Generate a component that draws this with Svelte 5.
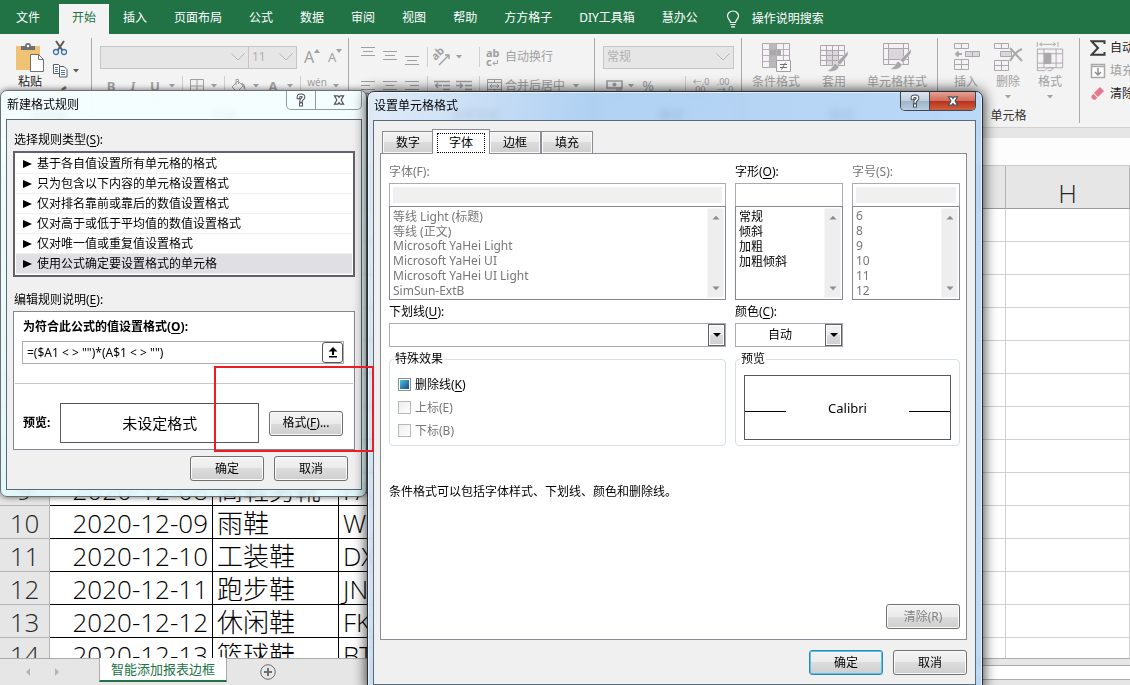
<script lang="ts">
	const menuTabs = [
		'开始',
		'插入',
		'页面布局',
		'公式',
		'数据',
		'审阅',
		'视图',
		'帮助',
		'方方格子',
		'DIY工具箱',
		'慧办公'
	];

	const columns = ['A', 'B', 'C', 'D', 'E', 'F', 'G', 'H'];

	const records: Record<number, string[]> = {
		9: ['2020-12-08', '高鞋男靴', 'FA'],
		10: ['2020-12-09', '雨鞋', 'W'],
		11: ['2020-12-10', '工装鞋', 'DX'],
		12: ['2020-12-11', '跑步鞋', 'JN'],
		13: ['2020-12-12', '休闲鞋', 'FK'],
		14: ['2020-12-13', '篮球鞋', 'BT']
	};
	const rows = Array.from({ length: 14 }, (_, i) => i + 1);

	const ruleTypes = [
		'基于各自值设置所有单元格的格式',
		'只为包含以下内容的单元格设置格式',
		'仅对排名靠前或靠后的数值设置格式',
		'仅对高于或低于平均值的数值设置格式',
		'仅对唯一值或重复值设置格式',
		'使用公式确定要设置格式的单元格'
	];
	let selectedRule = $state(5);
	let formula = $state('=($A1 < > "")*(A$1 < > "")');

	const formatTabs = ['数字', '字体', '边框', '填充'];
	let activeTab = $state('字体');
	let strikeMixed = $state(true);

	const fonts = [
		'等线 Light (标题)',
		'等线 (正文)',
		'Microsoft YaHei Light',
		'Microsoft YaHei UI',
		'Microsoft YaHei UI Light',
		'SimSun-ExtB'
	];
	const fontStyles = ['常规', '倾斜', '加粗', '加粗倾斜'];
	const sizes = ['6', '8', '9', '10', '11', '12'];
</script>

{#snippet caret()}
	<svg class="caret" width="12" height="6" viewBox="0 0 12 6" aria-hidden="true">
		<path d="M3 1h6L6 4.5z" fill="currentColor" />
	</svg>
{/snippet}

{#snippet chevron()}
	<svg class="chevron" width="16" height="10" viewBox="0 0 16 10" aria-hidden="true">
		<path d="M1.500 1.500 8 8l6.500-6.500" fill="none" stroke="#b4b4b4" />
	</svg>
{/snippet}

{#snippet lines(widths: number[], top: number, align: string)}
	<svg width="16" height="20" viewBox="0 0 16 20" aria-hidden="true">
		{#each widths as w, i}
			<rect
				x={align === 'left' ? 1 : align === 'right' ? 15 - w : 8 - w / 2}
				y={top + i * 4}
				width={w}
				height="1"
				fill="#a0a0a0"
			/>
		{/each}
	</svg>
{/snippet}

{#snippet label(text: string, key: string)}{text}(<u>{key}</u>){/snippet}

{#snippet helpGlyph()}
	<svg width="12" height="14" viewBox="0 0 12 14" aria-hidden="true">
		<g fill="none" stroke-linecap="square">
			<path d="M3.500 4.500V3.800C3.500 2.600 4.600 2.200 6 2.200s2.600.6 2.600 2S6 6.200 6 8" stroke="#4a4f5c" stroke-width="3.600" />
			<path d="M3.500 4.500V3.800C3.500 2.600 4.600 2.200 6 2.200s2.600.6 2.600 2S6 6.200 6 8" stroke="#fff" stroke-width="1.600" />
		</g>
		<rect x="4.500" y="10" width="3" height="3" fill="#fff" stroke="#4a4f5c" />
	</svg>
{/snippet}

{#snippet closeGlyph()}
	<svg width="12" height="10" viewBox="0 0 14 12" aria-hidden="true">
		<path
			d="M1.500 1h4.200L7 3l1.300-2h4.200L9.500 6l3 5H8.300L7 9l-1.300 2H1.500l3-5z"
			fill="#fff"
			stroke="#4a4f5c"
			stroke-width="1.400"
		/>
	</svg>
{/snippet}

{#snippet scrollbar()}
	<span class="scrollbar" aria-hidden="true">
		<svg width="8" height="5" viewBox="0 0 8 5"><path d="M0.500 4.500 4 .8l3.500 3.700z" fill="#8c8c8c" /></svg>
		<svg width="8" height="5" viewBox="0 0 8 5"><path d="M0.500 .5 4 4.200 7.500 .5z" fill="#8c8c8c" /></svg>
	</span>
{/snippet}

{#snippet drop()}
	<span class="drop" aria-hidden="true">
		<svg width="8" height="4" viewBox="0 0 8 4"><path d="M0 0h8L4 4z" /></svg>
	</span>
{/snippet}

<div class="app">
	<nav class="menu">
		<button class="tab file">文件</button>
		{#each menuTabs as tab}
			<button class="tab" class:active={tab === '开始'}>{tab}</button>
		{/each}
		<button class="tell-me">
			<svg width="14" height="18" viewBox="0 0 14 18" fill="none" stroke="#fff" aria-hidden="true">
				<path d="M4.500 12.500c0-2.500-3-3.500-3-6.500a5.500 5 0 0 1 11 0c0 3-3 4-3 6.500z" stroke-width="1.200" />
				<path d="M4.500 14.500h5M5 16.800h4" stroke-width="1.200" />
			</svg>
			操作说明搜索
		</button>
	</nav>

	<div class="ribbon">
		<section class="group clipboard">
			<div class="tools">
				<button class="big">
					<svg width="30" height="30" viewBox="0 0 30 30" aria-hidden="true">
						<rect x="1" y="4" width="24" height="24" fill="#efc373" />
						<path d="M6 8V4h4a3 3 0 0 1 6 0h4v4z" fill="#707070" />
						<circle cx="13" cy="4" r="1.200" fill="#fff" />
						<path d="M15.500 12.500h8l5 5v12h-13z" fill="#fff" stroke="#707070" />
						<path d="M23.500 12.500v5h5" fill="none" stroke="#707070" />
					</svg>
					粘贴
				</button>
				<div class="small">
					<svg width="16" height="16" viewBox="0 0 16 16" aria-hidden="true">
						<path d="M4 1l6.500 9.500M12 1 5.500 10.500" stroke="#5a5a5a" stroke-width="2" />
						<circle cx="4" cy="12" r="2.500" fill="none" stroke="#3c78b4" stroke-width="1.300" />
						<circle cx="12" cy="12" r="2.500" fill="none" stroke="#3c78b4" stroke-width="1.300" />
					</svg>
					<span class="pair">
						<svg width="16" height="15" viewBox="0 0 16 15" aria-hidden="true">
							<path d="M1.500 1.500h5l3 3v6h-8z" fill="#fff" stroke="#5a5a5a" />
							<path d="M7.500 3.500h4.500l3 3v7.500H7.500z" fill="#fff" stroke="#5a5a5a" />
							<path d="M3 4.500h3M3 6.500h3M3 8.500h3M9 7.500h4M9 9.500h4M9 11.500h4" stroke="#3c78b4" />
						</svg>
						{@render caret()}
					</span>
					<svg width="16" height="12" viewBox="0 0 16 12" aria-hidden="true">
						<path d="M9 4l4-3 2 2-4 3z" fill="#707070" />
						<path d="M3 8l6-4 2 3-4 5z" fill="#efc373" />
					</svg>
				</div>
			</div>
			<h2>剪贴板</h2>
		</section>

		<section class="group font">
			<div class="row">
				<span class="combo name"><select aria-label="字体" disabled></select>{@render chevron()}</span>
				<span class="combo size">
					<select aria-label="字号" disabled><option>11</option></select>{@render chevron()}
				</span>
				<span class="grow">
					A<svg width="6" height="4" viewBox="0 0 6 4" aria-hidden="true"><path d="M0 4h6L3 0z" /></svg>
				</span>
				<span class="grow shrink">
					A<svg width="6" height="4" viewBox="0 0 6 4" aria-hidden="true"><path d="M0 0h6L3 4z" /></svg>
				</span>
			</div>
			<div class="row">
				<b class="cell">B</b>
				<i class="cell">I</i>
				<u class="cell">U</u>
				{@render caret()}
				<span class="sep"></span>
				<span class="cell">
					<svg width="14" height="14" viewBox="0 0 14 14" aria-hidden="true">
						<path d="M.5.500h13v13H.5zM7 .5v13M.5 7h13" fill="none" stroke="#a0a0a0" />
					</svg>
				</span>
				{@render caret()}
				<span class="sep"></span>
				<span class="cell">
					<svg width="18" height="16" viewBox="0 0 18 16" aria-hidden="true">
						<path d="M2 9l6-6 5 5-6 6zM6 7V1.500h2.500V6" fill="none" stroke="#a0a0a0" />
						<path d="M11 5c3 0 4.500 2 4.500 7-2-1-2-3-2.500-4z" fill="#a0a0a0" />
					</svg>
				</span>
				{@render caret()}
				<b class="cell">A</b>
				{@render caret()}
				<span class="sep"></span>
				<span class="cell phonetic">wén</span>
				{@render caret()}
			</div>
			<h2>字体</h2>
		</section>

		<section class="group align">
			<div class="row">
				<span class="cell">{@render lines([14, 10, 14], 0, 'center')}</span>
				<span class="cell">{@render lines([14, 10, 14], 4, 'center')}</span>
				<span class="cell">{@render lines([14, 10, 14], 9, 'center')}</span>
				<span class="sep"></span>
				<span class="cell">
					<svg width="18" height="18" viewBox="0 0 18 18" aria-hidden="true">
						<text x="0" y="9" transform="rotate(-45 6 8)" font-size="11" font-weight="700" fill="#a0a0a0">ab</text>
						<path d="M6 17 16 7M12 7h4v4" fill="none" stroke="#a0a0a0" stroke-width="1.400" />
					</svg>
				</span>
				{@render caret()}
				<span class="sep after-caret"></span>
				<span class="cell wrap-icon">
					<span>ab</span>
					<span>c<svg width="6" height="6" viewBox="0 0 6 6" aria-hidden="true"><path d="M5.500 0v3.500H1M3 1.500l-2 2 2 2" fill="none" stroke="#a0a0a0" /></svg></span>
				</span>
				<span>自动换行</span>
			</div>
			<div class="row">
				<span class="cell">{@render lines([14, 9, 14, 9], 5, 'left')}</span>
				<span class="cell">{@render lines([14, 9, 14, 9], 5, 'center')}</span>
				<span class="cell">{@render lines([14, 9, 14, 9], 5, 'right')}</span>
				<span class="sep"></span>
				<span class="cell">
					<svg width="16" height="14" viewBox="0 0 16 14" aria-hidden="true">
						<path d="M0 2.500h16M9 6.500h7M9 10.500h7M8 6.500H2M4 4 1.500 6.500 4 9" fill="none" stroke="#a0a0a0" stroke-width="1.400" />
					</svg>
				</span>
				<span class="cell">
					<svg width="16" height="14" viewBox="0 0 16 14" aria-hidden="true">
						<path d="M0 2.500h16M9 6.500h7M9 10.500h7M0 6.500h6M4 4l2.500 2.500L4 9" fill="none" stroke="#a0a0a0" stroke-width="1.400" />
					</svg>
				</span>
				<span class="sep"></span>
				<span class="cell">
					<svg width="15" height="14" viewBox="0 0 15 14" aria-hidden="true">
						<path d="M.5.500h14v13H.5zM.5 3.500h14M.5 10.500h14M7.500 .5v3M7.500 10.500v3M3 7h9M5 5 3 7l2 2M10 5l2 2-2 2" fill="none" stroke="#a0a0a0" />
					</svg>
				</span>
				<span>合并后居中</span>
				<span class="cell">{@render caret()}</span>
			</div>
			<h2>对齐方式</h2>
		</section>

		<section class="group number">
			<div class="row">
				<span class="combo format">
					<select aria-label="数字格式" disabled><option>常规</option></select>{@render chevron()}
				</span>
			</div>
			<div class="row">
				<span class="cell">
					<svg width="17" height="14" viewBox="0 0 17 14" aria-hidden="true">
						<path d="M1 2h15v7H1z" fill="none" stroke="#a0a0a0" stroke-width="1.600" />
						<circle cx="8.500" cy="5.500" r="2" fill="#a0a0a0" />
						<path d="M10 9h6M10 11h6M10 13h6" stroke="#a0a0a0" />
					</svg>
				</span>
				{@render caret()}
				<span class="cell percent">%</span>
				<b class="cell percent">,</b>
				<span class="sep"></span>
				<span class="cell digits">←.0<br />.00</span>
				<span class="cell digits">.00<br />→.0</span>
			</div>
			<h2>数字</h2>
		</section>

		<section class="group styles">
			<div class="tools">
				<button class="big cond" disabled>
					<svg width="30" height="30" viewBox="0 0 30 30" aria-hidden="true">
						<path d="M1.500 1.500h27v24h-27z" fill="#f6f1f7" stroke="#a9a9a9" />
						<path d="M8 1.500h7v24H8z" fill="#bcb9bc" />
						<path d="M8 8h12v5H8z" fill="#a9a9a9" />
						<path d="M1.500 7.500h27M1.500 13.500h27M1.500 19.500h27M8.500 1.500v24M15.500 1.500v24M22.500 1.500v24" stroke="#b5b2b5" />
						<path d="M15.500 18.500h14v11h-14z" fill="#fafafa" stroke="#a0a0a0" />
						<path d="M19 22.500h7M19 25.500h7M24.500 20.500l-4 7" stroke="#707070" />
					</svg>
					条件格式
				</button>
				<button class="big table" disabled>
					<svg width="30" height="30" viewBox="0 0 30 30" aria-hidden="true">
						<path d="M1.500 3.500h24v20h-24z" fill="#f6f1f7" stroke="#a9a9a9" />
						<path d="M7 9h13v14H7z" fill="#dcd6dc" />
						<path d="M1.500 8.500h24M1.500 13.500h24M1.500 18.500h24M7.500 3.500v20M13.500 3.500v20M19.500 3.500v20" stroke="#a9a9a9" />
						<path d="M29 9 18 20l3 3 8-10zM16.500 21.500c-3 .5-2 5-8.500 7.500 7 1.500 11-1 12-4.500z" fill="#a9a6a9" stroke="#f3f3f3" stroke-width=".5" />
					</svg>
					套用
				</button>
				<button class="big cellstyle" disabled>
					<svg width="30" height="30" viewBox="0 0 30 30" aria-hidden="true">
						<path d="M1.500 1.500h25v21h-25z" fill="#f6f1f7" stroke="#a9a9a9" />
						<path d="M6 6h16v11H6z" fill="#dcd6dc" />
						<path d="M1.500 6.500h25M1.500 17.500h25M6.500 1.500v21M21.500 1.500v21" stroke="#a9a9a9" />
						<path d="M29 7 18 18l3 3 8-10zM16.500 19.500c-3 .5-2 5-8.500 7.500 7 1.500 11-1 12-4.500z" fill="#a9a6a9" stroke="#f3f3f3" stroke-width=".5" />
					</svg>
					单元格样式
				</button>
			</div>
			<h2>样式</h2>
		</section>

		<section class="group cells">
			<div class="tools">
				<button class="big" disabled>
					<svg width="28" height="30" viewBox="0 0 28 30" fill="#f6f1f7" stroke="#a9a9a9" aria-hidden="true">
						<path d="M2.500 1.500h14v5h-14zM9.500 1.500v5M2.500 17.500h14v10h-14zM9.500 17.500v10M2.500 22.500h14" />
						<path d="M13.500 9.500h14v5h-14zM20.500 9.500v5" fill="#dcd6dc" />
						<path d="M10 12H4M6.500 9.500 4 12l2.500 2.500" fill="none" stroke-width="1.800" />
					</svg>
					插入{@render caret()}
				</button>
				<button class="big" disabled>
					<svg width="30" height="30" viewBox="0 0 30 30" fill="#f6f1f7" stroke="#a9a9a9" aria-hidden="true">
						<path d="M1.500 1.500h14v5h-14zM8.500 1.500v5M1.500 18.500h14v10h-14zM8.500 18.500v10M1.500 23.500h14" />
						<path d="M7.500 9.500h11v5h-11z" fill="#dcd6dc" />
						<path d="M17 6l12 13M29 7c-5 2-9 6-12 12" fill="none" stroke-width="2" />
					</svg>
					删除{@render caret()}
				</button>
				<button class="big" disabled>
					<svg width="30" height="32" viewBox="0 0 30 32" fill="#f6f1f7" stroke="#a9a9a9" aria-hidden="true">
						<path d="M1.500 0v5M23.500 0v5M4 2.500h17M6.500 .5l-2.500 2 2.500 2M18.500 .5l2.500 2-2.500 2" fill="none" />
						<path d="M1.500 7.500h27v20h-27zM1.500 12.500h27M1.500 22.500h27M8.500 7.500v20M21.500 7.500v20" />
						<path d="M9 12h7v11H9z" fill="#a9a9a9" />
						<path d="M1.500 27.500v3h8l3-3h6l-2 3h-4" fill="none" />
					</svg>
					格式{@render caret()}
				</button>
			</div>
			<h2>单元格</h2>
		</section>

		<section class="edit">
			<button>
				<svg width="16" height="16" viewBox="0 0 16 16" aria-hidden="true">
					<path d="M14.500 4V1.200H1.500L8 8l-6.500 6.800h13V12" fill="none" stroke="#3b3b3b" stroke-width="2" />
				</svg>
				自动求和
			</button>
			<button disabled>
				<svg width="16" height="16" viewBox="0 0 16 16" aria-hidden="true">
					<path d="M1.500 1.500h13v13h-13zM1.500 3.500h13" fill="#fff" stroke="#a9a9a9" stroke-width="1.500" />
					<path d="M8 5v7M5 9l3 3 3-3" fill="none" stroke="#909090" stroke-width="1.500" />
				</svg>
				填充
			</button>
			<button>
				<svg width="16" height="16" viewBox="0 0 16 16" aria-hidden="true">
					<path d="M10 1l4 4-6 6-4-4z" fill="#e8778d" />
					<path d="M3.300 7.800l4 4-2 2H3.500L1.500 12V10z" fill="#e8778d" />
				</svg>
				清除
			</button>
		</section>
	</div>

	<div class="formula-bar"></div>

	<div class="grid">
		<table>
			<colgroup>
				<col class="col-head" /><col class="col-date" /><col class="col-name" />
				<col class="col-mid" /><col class="col-mid" /><col class="col-mid" /><col class="col-mid" />
				<col class="col-last" /><col />
			</colgroup>
			<thead>
				<tr>
					<th></th>
					{#each columns as column}
						<th>{column}</th>
					{/each}
				</tr>
			</thead>
			<tbody>
				{#each rows as row}
					<tr>
						<th>{row}</th>
						{#each columns as column, i}
							<td class:filled={i < 5} class:date={i === 0}>{records[row]?.[i] ?? ''}</td>
						{/each}
					</tr>
				{/each}
			</tbody>
		</table>
	</div>

	<footer class="sheets">
		<svg class="nav" width="64" height="10" viewBox="0 0 64 10" fill="#b4b4b4" aria-hidden="true">
			<path d="M10 1v8L6 5zM35 1v8l4-4z" />
		</svg>
		<button class="sheet">智能添加报表边框</button>
		<button class="add" aria-label="新工作表">
			<svg width="16" height="16" viewBox="0 0 16 16" fill="none" stroke="#6e6e6e" aria-hidden="true">
				<circle cx="8" cy="8" r="7.300" />
				<path d="M8 4v8M4 8h8" stroke-width="2" />
			</svg>
		</button>
		<div class="hscroll"></div>
	</footer>

	<div class="dialog rule" role="dialog" aria-label="新建格式规则">
		<header>
			<h1>新建格式规则</h1>
			<span class="caption">
				<button aria-label="帮助">{@render helpGlyph()}</button>
				<button class="close" aria-label="关闭">{@render closeGlyph()}</button>
			</span>
		</header>
		<div class="body">
			<p class="heading">{@render label('选择规则类型', 'S')}:</p>
			<ul class="types">
				{#each ruleTypes as type, i}
					<li>
						<button class:selected={selectedRule === i} onclick={() => (selectedRule = i)}>
							<svg width="9" height="8" viewBox="0 0 9 8" aria-hidden="true"><path d="M0 0l9 4-9 4z" /></svg>
							{type}
						</button>
					</li>
				{/each}
			</ul>
			<p class="heading second">{@render label('编辑规则说明', 'E')}:</p>
			<div class="description">
				<label for="formula">{@render label('为符合此公式的值设置格式', 'O')}:</label>
				<div class="formula">
					<input id="formula" bind:value={formula} />
					<button aria-label="选择区域">
						<svg width="10" height="11" viewBox="0 0 10 11" aria-hidden="true">
							<path d="M5 0l4.500 4.500H6V8H4V4.500H.5zM1 9h8v1.500H1z" />
						</svg>
					</button>
				</div>
				<hr />
				<div class="preview-row">
					<b>预览:</b>
					<output>未设定格式</output>
					<button class="btn">{@render label('格式', 'F')}...</button>
				</div>
			</div>
			<div class="actions">
				<button class="btn">确定</button>
				<button class="btn">取消</button>
			</div>
		</div>
	</div>

	<div class="dialog cellfmt" role="dialog" aria-label="设置单元格格式">
		<header>
			<h1>设置单元格格式</h1>
			<span class="caption">
				<button aria-label="帮助">{@render helpGlyph()}</button>
				<button class="close" aria-label="关闭">{@render closeGlyph()}</button>
			</span>
		</header>
		<div class="body">
			<div class="tabs" role="tablist">
				{#each formatTabs as tab}
					<button role="tab" aria-selected={activeTab === tab} onclick={() => (activeTab = tab)}>
						<span>{tab}</span>
					</button>
				{/each}
			</div>
			<div class="panel">
				<div class="fields">
					<div class="field off">
						<label for="font-name">字体(F):</label>
						<input id="font-name" disabled />
						<div class="list">
							<select size="6" aria-label="字体列表" disabled>
								{#each fonts as font}<option>{font}</option>{/each}
							</select>
							{@render scrollbar()}
						</div>
					</div>
					<div class="field">
						<label for="font-style">{@render label('字形', 'O')}:</label>
						<input id="font-style" />
						<div class="list">
							<select size="6" aria-label="字形列表">
								{#each fontStyles as style}<option>{style}</option>{/each}
							</select>
							{@render scrollbar()}
						</div>
					</div>
					<div class="field off">
						<label for="font-size">字号(S):</label>
						<input id="font-size" disabled />
						<div class="list">
							<select size="6" aria-label="字号列表" disabled>
								{#each sizes as size}<option>{size}</option>{/each}
							</select>
							{@render scrollbar()}
						</div>
					</div>
					<div class="field picker">
						<label for="underline">{@render label('下划线', 'U')}:</label>
						<span class="dropdown"><select id="underline"><option></option></select>{@render drop()}</span>
					</div>
					<div class="field picker">
						<label for="color">{@render label('颜色', 'C')}:</label>
						<span class="dropdown color"><select id="color"><option>自动</option></select>{@render drop()}</span>
					</div>
					<fieldset class="effects">
						<legend>特殊效果</legend>
						<label>
							<input type="checkbox" bind:indeterminate={strikeMixed} />
							<span>{@render label('删除线', 'K')}</span>
						</label>
						<label class="off"><input type="checkbox" disabled />上标(E)</label>
						<label class="off"><input type="checkbox" disabled />下标(B)</label>
					</fieldset>
					<fieldset class="sample">
						<legend>预览</legend>
						<div><span>Calibri</span></div>
					</fieldset>
				</div>
				<p class="note">条件格式可以包括字体样式、下划线、颜色和删除线。</p>
				<button class="btn clear" disabled>清除(R)</button>
			</div>
			<div class="actions">
				<button class="btn default">确定</button>
				<button class="btn">取消</button>
			</div>
		</div>
	</div>

	<div class="marker"></div>
</div>

<style>
	:global(body) {
		background: #e6e6e6;
	}
	.app {
		position: relative;
		display: flex;
		flex-direction: column;
		height: 100vh;
		overflow: hidden;
		font: 12px/18px 'Noto Sans', 'Noto Sans CJK SC', sans-serif;
		color: #000;
	}
	.app :global(*) {
		box-sizing: border-box;
	}
	button,
	input,
	select {
		margin: 0;
		padding: 0;
		border: 0;
		background: none;
		color: inherit;
		font: inherit;
	}
	h1,
	h2,
	p,
	ul {
		margin: 0;
		padding: 0;
		font-size: 12px;
		font-weight: 400;
		list-style: none;
	}
	svg {
		flex: none;
	}
	u {
		text-underline-offset: 2px;
	}

	/* menu */
	.menu {
		display: flex;
		gap: 1px;
		height: 34px;
		padding-top: 4px;
		background: #217346;
		color: #fff;
		white-space: nowrap;
	}
	.tab {
		padding: 0 13px 2px;
	}
	.tab.file {
		margin-right: 2px;
		padding: 0 16px 2px;
	}
	.tab.active {
		background: #f3f3f3;
		color: #217346;
	}
	.tell-me {
		display: flex;
		align-items: center;
		gap: 12px;
		margin-left: 14px;
	}

	/* ribbon */
	.ribbon {
		display: flex;
		height: 94px;
		flex: none;
		padding: 4px 0;
		overflow: hidden;
		border-bottom: 1px solid #d2d2d2;
		background: #f3f3f3;
		color: #a0a0a0;
		white-space: nowrap;
	}
	.group {
		display: grid;
		flex: none;
		grid-template-rows: 38px 20px 26px;
		padding: 0 0 0 8px;
		border-right: 1px solid #ababab;
	}
	.group h2 {
		grid-row: 3;
		align-self: end;
		color: #333;
		line-height: 12px;
		text-align: center;
	}
	.clipboard {
		width: 92px;
	}
	.font {
		width: 257px;
	}
	.align {
		width: 246px;
	}
	.number {
		width: 147px;
	}
	.styles {
		width: 196px;
		padding-left: 4px;
	}
	.cells {
		width: 142px;
		padding: 0 7px;
	}
	.row,
	.tools {
		display: flex;
		align-items: center;
	}
	.tools {
		grid-row: 1 / 3;
		align-items: start;
		min-height: 0;
	}
	.big {
		display: flex;
		flex-direction: column;
		align-items: center;
		width: 42px;
		padding-top: 4px;
		line-height: 20px;
	}
	.big:not(:disabled) {
		color: #222;
	}
	.clipboard .big {
		width: 44px;
	}
	.big svg:first-child {
		height: 30px;
	}
	.big .caret {
		margin-top: 2px;
	}
	.cond {
		width: 60px;
	}
	.table {
		width: 56px;
	}
	.cellstyle {
		width: 70px;
	}
	.small {
		display: flex;
		flex-direction: column;
		gap: 7px;
		padding-top: 2px;
		color: #5a5a5a;
	}
	.pair {
		display: flex;
		align-items: center;
		gap: 2px;
	}
	.combo {
		display: grid;
		height: 23px;
		border: 1px solid #c6c6c6;
		background: #e6e6e6;
	}
	.combo > :global(*) {
		grid-area: 1 / 1;
	}
	.combo select {
		padding: 0 3px;
		appearance: none;
		color: #b0b0b0;
		opacity: 1;
	}
	.chevron {
		align-self: center;
		justify-self: end;
		margin-right: 2px;
		pointer-events: none;
	}
	.combo.name {
		width: 149px;
	}
	.combo.size {
		width: 49px;
		margin-left: -1px;
	}
	.combo.format {
		width: 131px;
	}
	.grow {
		display: flex;
		width: 24px;
		padding-left: 7px;
		font-size: 16px;
	}
	.grow svg {
		margin-top: 1px;
		fill: currentColor;
	}
	.grow.shrink {
		font-size: 13px;
	}
	.cell {
		display: flex;
		justify-content: center;
		width: 22px;
		font-size: 13px;
	}
	i.cell {
		font-family: 'Liberation Serif', serif;
		font-weight: 700;
	}
	u.cell {
		font-weight: 700;
	}
	.wrap-icon {
		flex-direction: column;
		align-items: start;
		padding-left: 3px;
		font-size: 11px;
		font-weight: 700;
		line-height: 9px;
	}
	.cell.phonetic {
		width: 26px;
		padding-bottom: 8px;
		font-size: 10px;
	}
	.cell.digits {
		width: 24px;
		font-size: 9px;
		line-height: 8px;
	}
	.cell.percent {
		font-size: 14px;
	}
	.sep {
		width: 8px;
		height: 20px;
		background: linear-gradient(#d0d0d0, #d0d0d0) center / 1px 100% no-repeat;
	}
	.sep.after-caret {
		margin-left: 10px;
	}
	.edit {
		display: flex;
		flex-direction: column;
		gap: 5px;
		padding: 1px 0 0 10px;
	}
	.edit button {
		display: flex;
		align-items: center;
		gap: 4px;
		color: #222;
	}
	.edit button:disabled {
		color: #a0a0a0;
	}

	/* worksheet */
	.formula-bar {
		flex: none;
		height: 38px;
		border-top: 10px solid #e6e6e6;
		border-bottom: 1px solid #c9c9c9;
		background: #fdfdfd;
	}
	.grid {
		flex: 1;
		min-height: 0;
		overflow: hidden;
		background: #fff;
	}
	table {
		width: 100%;
		border-spacing: 0;
		table-layout: fixed;
		font-family: 'Open Sans', 'Noto Sans CJK SC', sans-serif;
		font-size: 26px;
		font-weight: 300;
		line-height: 30px;
	}
	.col-head {
		width: 50px;
	}
	.col-date {
		width: 163px;
	}
	.col-name {
		width: 126px;
	}
	.col-mid {
		width: 133px;
	}
	.col-last {
		width: 135px;
	}
	th,
	td {
		height: 33px;
		padding: 2px 0 0;
		border: 0 solid #d0d0d0;
		border-width: 0 1px 1px 0;
		overflow: hidden;
		white-space: nowrap;
	}
	th {
		border-color: #b4b4b4;
		background: #e6e6e6;
		color: #262626;
		font-weight: 300;
	}
	thead th {
		height: 43px;
		padding-top: 12px;
		border-bottom-color: #9b9b9b;
	}
	td {
		padding-left: 4px;
	}
	td.filled {
		border-color: #000;
	}
	td.date {
		padding-right: 4px;
		text-align: right;
	}
	.sheets {
		display: flex;
		flex: none;
		height: 27px;
		border-top: 1px solid #ababab;
		background: #e6e6e6;
	}
	.nav {
		align-self: center;
		margin: 0 15px 0 20px;
	}
	.sheet {
		width: 128px;
		height: 24px;
		margin-top: -1px;
		border: 1px solid #ababab;
		border-width: 0 1px 2px;
		border-bottom-color: #217346;
		background: #fff;
		color: #217346;
		font-size: 13px;
	}
	.add {
		display: flex;
		margin: 5px 0 0 33px;
	}
	.hscroll {
		flex: 1;
		height: 15px;
		margin: 6px 0 0 120px;
		border: 1px solid #ababab;
		border-right: 0;
		background: #fff;
	}

	/* dialogs */
	.dialog {
		position: absolute;
		border: 1px solid #2b2f33;
		border-radius: 7px;
		backdrop-filter: blur(3px);
	}
	.dialog header {
		display: flex;
		align-items: start;
		justify-content: space-between;
		height: 28px;
	}
	.dialog h1 {
		padding: 5px 0 0 1px;
	}
	.body {
		display: flex;
		flex-direction: column;
		border: 1px solid #5c6a75;
		background: #f0f0f0;
	}
	.caption {
		display: flex;
		border: 1px solid #8f9ba3;
		border-top: 0;
		border-radius: 0 0 5px 5px;
		overflow: hidden;
	}
	.caption button {
		display: flex;
		align-items: center;
		justify-content: center;
		width: 28px;
		height: 18px;
	}
	.caption .close {
		width: 46px;
		border-left: 1px solid #8f9ba3;
	}
	.btn {
		width: 74px;
		height: 25px;
		border: 1px solid #707070;
		border-radius: 3px;
		background: linear-gradient(#f3f3f3, #ebebeb 50%, #dcdcdc 50%, #cecece);
		box-shadow: inset 0 0 0 1px #fbfbfb;
	}
	.btn.default {
		border-color: #3c7fb1;
		box-shadow: inset 0 0 0 1px #4cc9f0;
	}
	.btn:disabled {
		color: #838383;
	}
	.actions {
		display: flex;
		gap: 10px;
		justify-content: flex-end;
	}

	.rule {
		top: 90px;
		left: 0;
		width: 367px;
		padding: 0 4px 6px 5px;
		background: linear-gradient(rgba(245, 255, 255, 0.9), rgba(225, 250, 253, 0.85));
		box-shadow: 0 0 6px rgba(0, 0, 0, 0.6);
		border-color: #6a7074;
	}
	.rule .body {
		padding: 11px 6px 8px;
	}
	.rule .heading {
		padding: 0 1px 2px;
	}
	.types {
		padding: 1px;
		border: 2px solid #62626a;
		background: #fff;
	}
	.types button {
		display: flex;
		align-items: center;
		gap: 5px;
		width: 100%;
		height: 20px;
		padding: 1px 0 0 7px;
		border-bottom: 1px solid #efefef;
	}
	.types button.selected {
		background: #e0dfe4;
	}
	.rule .heading.second {
		padding-top: 14px;
	}
	.description {
		padding: 6px 8px;
		border: 1px solid #828790;
		background: #fff;
	}
	.description label {
		display: block;
		padding-left: 1px;
		font-weight: 700;
	}
	.formula {
		display: flex;
		height: 23px;
		margin: 5px 2px 0 0;
		border: 1px solid #ababb3;
	}
	.formula input {
		flex: 1;
		min-width: 0;
		padding-left: 4px;
	}
	.formula button {
		width: 21px;
		border: 1px solid #555;
		border-radius: 3px;
		line-height: 10px;
	}
	hr {
		margin: 19px -7px 0;
		border: 0;
		border-top: 1px solid #c8c8c8;
	}
	.preview-row {
		display: flex;
		align-items: center;
		gap: 10px;
		margin-top: 19px;
		padding: 0 3px 0 1px;
	}
	.preview-row output {
		flex: 1;
		height: 40px;
		border: 1px solid #595959;
		font-size: 15px;
		line-height: 38px;
		text-align: center;
	}
	.rule .actions {
		margin-top: 6px;
		padding-right: 7px;
	}

	.cellfmt {
		top: 91px;
		left: 367px;
		width: 616px;
		padding: 0 6px 7px 5px;
		background: linear-gradient(100deg, rgba(222, 234, 248, 0.85), rgba(165, 203, 242, 0.85) 30%, rgba(178, 212, 248, 0.85));
		box-shadow:
			inset 0 0 0 1px rgba(255, 255, 255, 0.6),
			0 0 14px rgba(0, 0, 0, 0.85);
	}
	.cellfmt .caption {
		border-color: #40474f;
	}
	.cellfmt .caption button {
		background: linear-gradient(#dbe6f1, #c0cedb 50%, #9eb3c6 50%, #b8cde0);
	}
	.cellfmt .caption .close {
		border-color: #40474f;
		background: linear-gradient(#e6a294, #cf6a58 50%, #b8301c 50%, #cf5f3c);
	}
	.cellfmt .body {
		padding: 8px 8px 9px 6px;
	}
	.tabs {
		display: flex;
		align-items: end;
		height: 24px;
		padding-left: 2px;
	}
	.tabs button {
		width: 52px;
		height: 22px;
		border: 1px solid #898c95;
		border-bottom: 0;
		background: linear-gradient(#f3f3f3, #ebebeb 50%, #dcdcdc 50%, #cfcfcf);
		box-shadow: inset 0 0 0 1px #fafafa;
	}
	.tabs [aria-selected='true'] {
		z-index: 1;
		width: 58px;
		height: 25px;
		margin: 0 -1px -1px -2px;
		padding: 3px 4px 2px;
		background: #fff;
	}
	.tabs [aria-selected='true'] span {
		display: block;
		border: 1px dotted #000;
		line-height: 18px;
	}
	.panel {
		display: flex;
		flex-direction: column;
		min-height: 487px;
		padding: 9px 6px 10px 8px;
		border: 1px solid #898c95;
		background: #fff;
	}
	.fields {
		display: grid;
		grid-template-columns: 1fr 108px 108px;
		gap: 3px 9px;
	}
	.field {
		display: flex;
		flex-direction: column;
	}
	.field > label {
		height: 20px;
	}
	.off {
		color: #777;
	}
	.field > input {
		height: 24px;
		border: 1px solid #ababb3;
	}
	.field > input:disabled {
		padding: 2px;
		background: #f0f0f0;
		box-shadow: inset 0 0 0 3px #fff;
	}
	.list {
		display: flex;
		height: 94px;
		margin-top: -1px;
		padding: 1px;
		border: 1px solid #828790;
	}
	.list select {
		flex: 1;
		min-width: 0;
		overflow: hidden;
		border-radius: 0;
		outline: 0;
		opacity: 1;
	}
	.list option {
		display: flex;
		align-items: center;
		height: 15px;
		min-height: 0;
		padding: 0 2px;
		color: #000;
	}
	.off .list option {
		color: #777;
	}
	.scrollbar {
		display: flex;
		flex-direction: column;
		align-items: center;
		justify-content: space-between;
		width: 17px;
		padding: 6px 0;
		border: 1px solid #f6f6f6;
		background: #eee;
	}
	.picker {
		grid-row: 2;
	}
	.dropdown {
		display: grid;
		height: 24px;
		border: 1px solid #ababb3;
	}
	.dropdown > :global(*) {
		grid-area: 1 / 1;
	}
	.dropdown select {
		appearance: none;
	}
	.dropdown.color select {
		padding-right: 18px;
		text-align: center;
		text-align-last: center;
	}
	.drop {
		display: flex;
		align-items: center;
		justify-content: center;
		justify-self: end;
		width: 17px;
		border: 1px solid #60646a;
		background: linear-gradient(#f3f3f3, #ebebeb 50%, #dcdcdc 50%, #cecece);
		box-shadow: inset 0 0 0 1px #fbfbfb;
		pointer-events: none;
	}
	fieldset {
		grid-row: 3;
		min-width: 0;
		height: 96px;
		margin: 0;
		padding: 5px 8px;
		border: 1px solid #d5dfe5;
		border-radius: 4px;
	}
	legend {
		margin-left: -4px;
		padding: 0 1px;
	}
	.effects label {
		display: flex;
		align-items: center;
		gap: 4px;
		height: 23px;
	}
	.effects input {
		width: 13px;
		height: 13px;
		appearance: none;
		border: 1px solid #8e8f8f;
		background: #fff;
	}
	.effects input:disabled {
		border-color: #b8b8b8;
		background: linear-gradient(135deg, #ededed, #fff);
	}
	.effects input:indeterminate {
		padding: 1px;
		background: linear-gradient(135deg, #4cc3ec, #14477c) content-box;
		box-shadow: inset 0 0 0 1px #fff;
	}
	.sample {
		grid-column: 2 / 4;
		padding: 7px 8px;
	}
	.sample div {
		display: flex;
		align-items: center;
		justify-content: center;
		height: 65px;
		border: 1px solid #595959;
	}
	.sample div::before,
	.sample div::after {
		flex: none;
		width: 41px;
		height: 1px;
		margin-top: 8px;
		background: #000;
		content: '';
	}
	.sample span {
		flex: 1;
		font-size: 13px;
		text-align: center;
	}
	.note {
		margin-top: 37px;
	}
	.btn.clear {
		align-self: end;
		margin-top: auto;
	}
	.cellfmt .actions {
		margin-top: 10px;
	}

	/* highlighted area around the format button */
	.marker {
		position: absolute;
		top: 366px;
		left: 214px;
		width: 160px;
		height: 86px;
		border: 2px solid #ed1c24;
		pointer-events: none;
	}
</style>
